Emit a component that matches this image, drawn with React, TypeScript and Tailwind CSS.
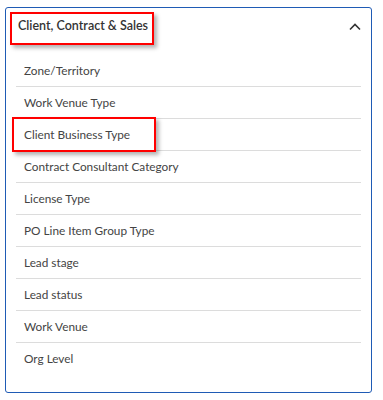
const items = [
  'Zone/Territory',
  'Work Venue Type',
  'Client Business Type',
  'Contract Consultant Category',
  'License Type',
  'PO Line Item Group Type',
  'Lead stage',
  'Lead status',
  'Work Venue',
  'Org Level',
];

function ChevronUp() {
  return (
    <svg width="12" height="8" viewBox="0 0 12 8" fill="none" className="text-[#333]">
      <path d="M1 6.5 L6 1.5 L11 6.5" stroke="currentColor" strokeWidth="1.6" />
    </svg>
  );
}

export default function App() {
  return (
    <div className="w-[383px] h-[400px] bg-white pt-[7px] pl-[5px] font-['Lato','Liberation_Sans',sans-serif] text-[#333]">
      <div className="relative w-[367px] h-[386px] rounded-[3px] border border-[#1f5bb5]">
        <div className="flex items-center justify-between h-[37px] pl-[12px] pr-[10px]">
          <span className="text-[12.5px] font-semibold">Client, Contract &amp; Sales</span>
          <ChevronUp />
        </div>
        <ul className="px-[10px] pt-[10px]">
          {items.map((item, i) => (
            <li
              key={item}
              className={
                i === items.length - 1
                  ? 'h-[31px] flex items-center pl-[8px] text-[11.8px] text-[#444]'
                  : 'h-[32px] flex items-center pl-[8px] text-[11.8px] text-[#444] border-b border-[#dcdcdc]'
              }
            >
              {item}
            </li>
          ))}
        </ul>

        {/* annotation boxes */}
        <div className="absolute left-[4px] top-[4px] w-[144px] h-[33px] border-2 border-[#f00] shadow-[3px_3px_4px_rgba(0,0,0,0.3)]" />
        <div className="absolute left-[6px] top-[109px] w-[144px] h-[35px] border-2 border-[#f00] shadow-[3px_3px_4px_rgba(0,0,0,0.3)]" />
      </div>
    </div>
  );
}
